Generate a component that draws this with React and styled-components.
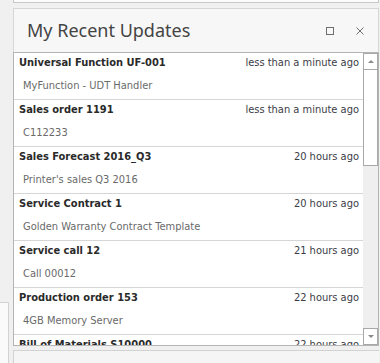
import React from 'react';
import styled, { createGlobalStyle } from 'styled-components';

const GlobalStyle = createGlobalStyle`
  html, body {
    margin: 0;
    padding: 0;
    background: #f0f0f0;
    overflow: hidden;
  }
`;

const updates = [
  { title: 'Universal Function UF-001', sub: 'MyFunction - UDT Handler', time: 'less than a minute ago' },
  { title: 'Sales order 1191', sub: 'C112233', time: 'less than a minute ago' },
  { title: 'Sales Forecast 2016_Q3', sub: "Printer's sales Q3 2016", time: '20 hours ago' },
  { title: 'Service Contract 1', sub: 'Golden Warranty Contract Template', time: '20 hours ago' },
  { title: 'Service call 12', sub: 'Call 00012', time: '21 hours ago' },
  { title: 'Production order 153', sub: '4GB Memory Server', time: '22 hours ago' },
  { title: 'Bill of Materials S10000', sub: 'Server', time: '22 hours ago' },
];

const Screen = styled.div`
  display: grid;
  grid-template-columns: 9px 366px;
  column-gap: 4px;
  width: 380px;
  height: 363px;
  overflow: hidden;
`;

const SideStub = styled.div`
  margin-top: 302px;
  background: #fafafa;
  border-top: 1px solid #d2d2d2;
  border-right: 1px solid #d2d2d2;
`;

const Column = styled.div`
  display: flex;
  flex-direction: column;
`;

const TopStub = styled.div`
  height: 2px;
  background: #fbfbfb;
  border: 1px solid #c8c8c8;
  border-top: none;
  margin-bottom: 5px;
`;

const Panel = styled.div`
  display: flex;
  flex-direction: column;
  background: #f7f7f7;
  border-top: 1px solid #d6d6d6;
`;

const Header = styled.div`
  display: flex;
  align-items: center;
  height: 43px;
  padding: 0 14px 0 13px;
  border-left: 1px solid #d6d6d6;
  border-right: 1px solid #d6d6d6;
`;

const Title = styled.h2`
  flex: 1;
  margin: 0 0 2px;
  font-family: "Noto Sans", "Open Sans", sans-serif;
  font-weight: 400;
  font-size: 18px;
  color: #444;
`;

const HeaderButtons = styled.div`
  display: flex;
  align-items: center;
  gap: 22px;
`;

const IconButton = styled.span`
  display: flex;
  width: 8px;
  height: 8px;
  color: #6e6e6e;
`;

const List = styled.div`
  display: flex;
  height: 292px;
  background: #fff;
  border: 1px solid #b4b4b4;
`;

const Rows = styled.div`
  flex: 1;
  overflow: hidden;
`;

const Row = styled.div`
  height: 47px;
  box-sizing: border-box;
  padding: 3px 4px 0 5px;
  border-bottom: 1px solid #d6d6d6;
  font-family: "DejaVu Sans", "Liberation Sans", sans-serif;
  font-stretch: condensed;
  font-size: 11px;
`;

const RowTop = styled.div`
  display: flex;
  align-items: baseline;
  justify-content: space-between;
  line-height: 14px;
`;

const ItemTitle = styled.span`
  font-weight: 700;
  color: #2a2a2a;
`;

const Time = styled.span`
  color: #3c3c46;
`;

const Sub = styled.div`
  margin: 9px 0 0 4px;
  line-height: 14px;
  color: #6a6a6a;
`;

const ScrollBar = styled.div`
  width: 15px;
  display: flex;
  flex-direction: column;
  background: #efefef;
`;

const ScrollButton = styled.div`
  height: 15px;
  display: flex;
  align-items: center;
  justify-content: center;
  background: #fff;
  border: 1px solid #a8a8a8;
`;

const Thumb = styled.div`
  height: 95px;
  background: #fff;
  border: 1px solid #a8a8a8;
  border-top: none;
`;

const Track = styled.div`
  flex: 1;
`;

const Arrow = styled.span`
  width: 0;
  height: 0;
  border-left: 3px solid transparent;
  border-right: 3px solid transparent;
  ${p => (p.$down ? 'border-top: 3px solid #8a8a8a;' : 'border-bottom: 3px solid #8a8a8a;')}
`;

const BottomPanel = styled.div`
  margin-top: 4px;
  height: 20px;
  background: #f5f5f5;
  border-top: 1px solid #d2d2d2;
  border-left: 1px solid #d2d2d2;
`;

export default function App() {
  return (
    <>
      <GlobalStyle />
      <Screen>
        <SideStub />
        <Column>
          <TopStub />
          <Panel>
            <Header>
              <Title>My Recent Updates</Title>
              <HeaderButtons>
                <IconButton>
                  <svg width="8" height="8" viewBox="0 0 8 8">
                    <rect x="0.5" y="0.5" width="7" height="7" fill="none" stroke="currentColor" />
                  </svg>
                </IconButton>
                <IconButton>
                  <svg width="8" height="8" viewBox="0 0 8 8">
                    <path d="M0.5 0.5 L7.5 7.5 M7.5 0.5 L0.5 7.5" stroke="currentColor" strokeWidth="1" />
                  </svg>
                </IconButton>
              </HeaderButtons>
            </Header>
            <List>
              <Rows>
                {updates.map(u => (
                  <Row key={u.title}>
                    <RowTop>
                      <ItemTitle>{u.title}</ItemTitle>
                      <Time>{u.time}</Time>
                    </RowTop>
                    <Sub>{u.sub}</Sub>
                  </Row>
                ))}
              </Rows>
              <ScrollBar>
                <ScrollButton><Arrow /></ScrollButton>
                <Thumb />
                <Track />
                <ScrollButton><Arrow $down /></ScrollButton>
              </ScrollBar>
            </List>
          </Panel>
          <BottomPanel />
        </Column>
      </Screen>
    </>
  );
}
